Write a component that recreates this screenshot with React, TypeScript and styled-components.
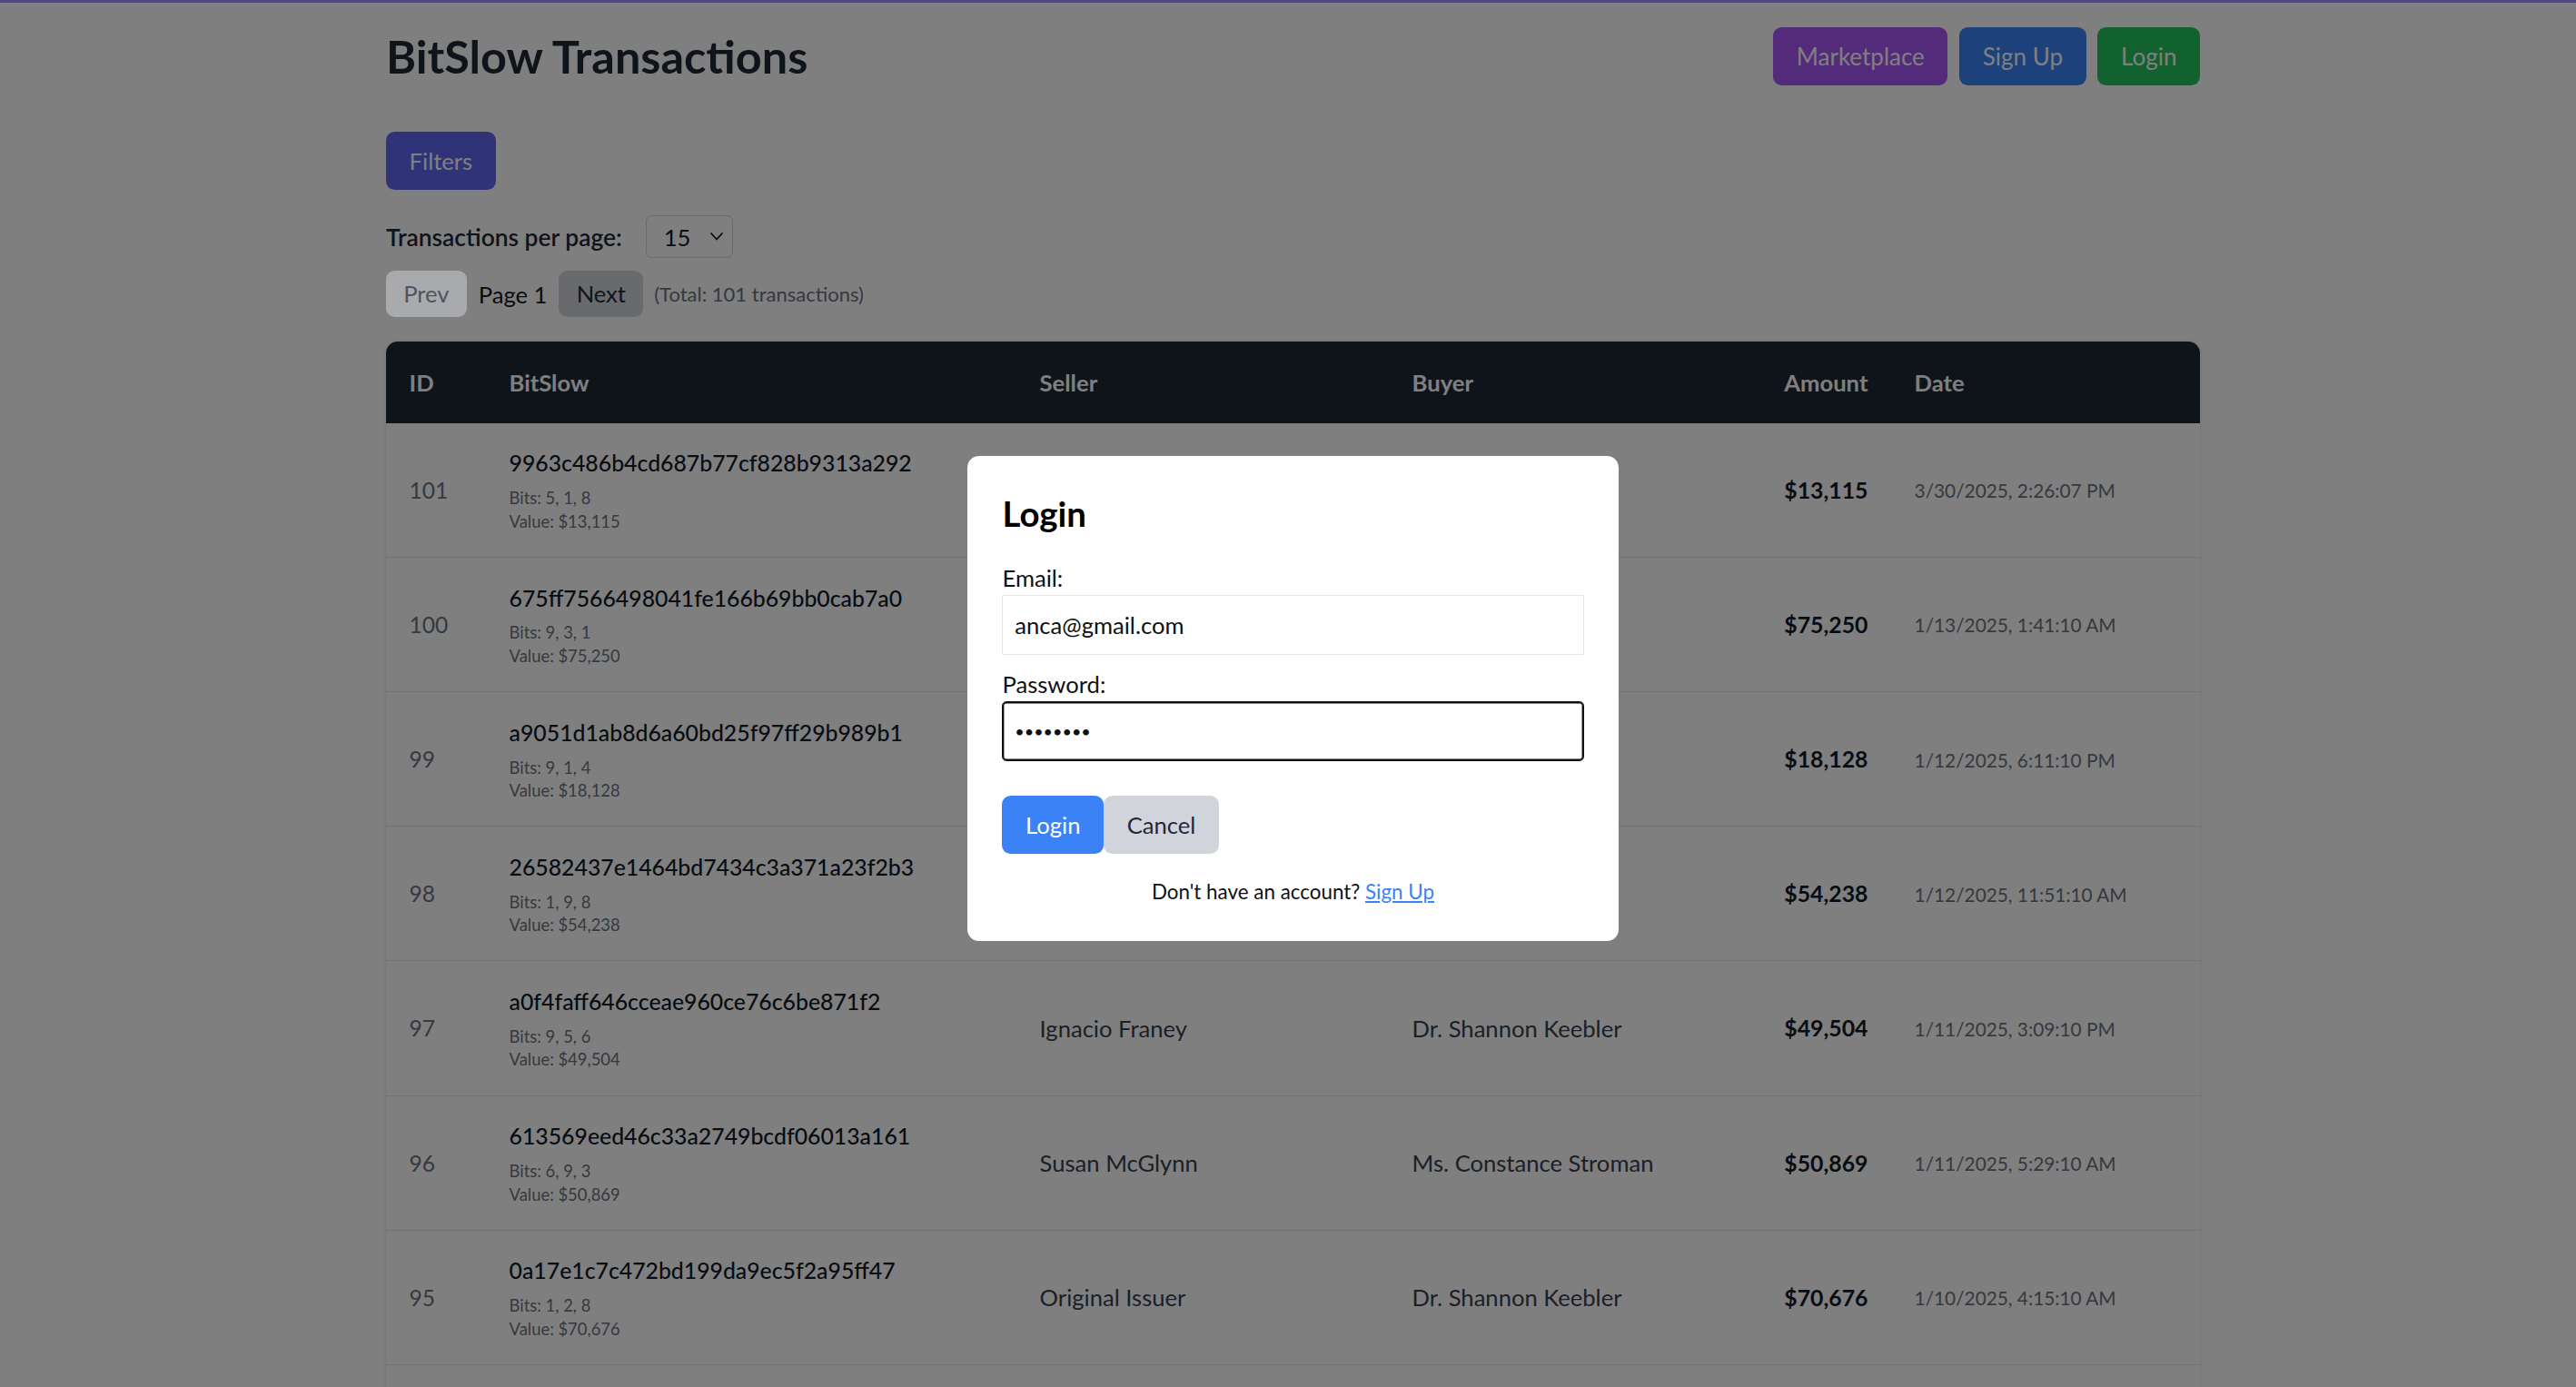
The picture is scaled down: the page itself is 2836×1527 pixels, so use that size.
import React from "react";
import styled, { createGlobalStyle } from "styled-components";

const FONT = `Lato, "Open Sans", "Noto Sans", sans-serif`;

const GlobalStyle = createGlobalStyle`
  * { box-sizing: border-box; }
  html, body { margin: 0; padding: 0; background: #ffffff; overflow: hidden; }
  body { font-family: ${FONT}; color: #1f2937; }
`;

const TopLine = styled.div`
  height: 3px;
  background: #a78bfa;
`;

const Container = styled.main`
  width: 2008px;
  margin: 0 auto;
  padding: 27px 0 0 11px;
`;

const Header = styled.header`
  display: flex;
  align-items: center;
  justify-content: space-between;
  margin-bottom: 51px;
`;

const Title = styled.h1`
  margin: 0;
  font-size: 50.4px;
  line-height: 57.6px;
  font-weight: 700;
  color: #1f2937;
`;

const Nav = styled.nav`
  display: flex;
  gap: 12.8px;
`;

const SolidButton = styled.button<{ $bg: string; $color?: string }>`
  border: none;
  margin: 0;
  font-family: ${FONT};
  font-size: 25.6px;
  line-height: 38.4px;
  padding: 12.8px 25.6px;
  border-radius: 9.6px;
  background: ${(p) => p.$bg};
  color: ${(p) => p.$color || "#ffffff"};
  cursor: pointer;
`;

const NavButton = styled(SolidButton)`
  font-size: 26px;
`;

const FiltersButton = styled(SolidButton)`
  display: block;
  margin-bottom: 28px;
`;

const PerPageRow = styled.div`
  display: flex;
  align-items: center;
  gap: 26px;
  margin-bottom: 14px;
`;

const PerPageLabel = styled.span`
  font-size: 26.4px;
  font-weight: 600;
  color: #1f2937;
`;

const SelectBox = styled.div`
  display: flex;
  align-items: center;
  justify-content: space-between;
  width: 96px;
  height: 47px;
  padding: 0 10px 0 19px;
  border: 1.6px solid #d1d5db;
  border-radius: 6.4px;
  font-size: 25.6px;
  color: #111827;
`;

const Pagination = styled.div`
  display: flex;
  align-items: center;
  margin-bottom: 27px;
`;

const PageButton = styled.button<{ $disabled?: boolean }>`
  border: none;
  margin: 0;
  font-family: ${FONT};
  font-size: 25.6px;
  line-height: 38.4px;
  padding: 6.4px 19.2px;
  border-radius: 9.6px;
  background: #d1d5db;
  color: #1f2937;
  ${(p) =>
    p.$disabled &&
    `
    opacity: 0.5;
    position: relative;
    z-index: 60;
  `}
`;

const PageLabel = styled.span`
  margin: 0 13px;
  font-size: 25.6px;
  color: #111827;
`;

const TotalText = styled.span`
  margin-left: 12px;
  font-size: 22px;
  color: #6b7280;
`;

const TableWrap = styled.div`
  border-radius: 12.8px;
  overflow: hidden;
  box-shadow: 0 1.6px 4.8px rgba(0, 0, 0, 0.12);
  background: #ffffff;
`;

const Table = styled.table`
  width: 100%;
  border-collapse: collapse;
  table-layout: fixed;
`;

const Th = styled.th<{ $right?: boolean }>`
  background: #1f2937;
  color: #ffffff;
  font-size: 25.6px;
  line-height: 38.4px;
  font-weight: 700;
  padding: 25.6px;
  text-align: ${(p) => (p.$right ? "right" : "left")};
`;

const Td = styled.td<{ $right?: boolean }>`
  padding: 25.6px;
  border-bottom: 1px solid #e5e7eb;
  vertical-align: middle;
  text-align: ${(p) => (p.$right ? "right" : "left")};
  font-size: 25.6px;
  line-height: 38.4px;
`;

const IdText = styled.span`
  font-size: 24.6px;
  color: #6b7280;
`;

const Hash = styled.div`
  font-size: 24.8px;
  font-weight: 500;
  color: #111827;
  white-space: nowrap;
`;

const Meta = styled.div`
  font-size: 18.4px;
  line-height: 25.6px;
  color: #6b7280;
`;

const MetaGroup = styled.div`
  margin-top: 6.4px;
`;

const Name = styled.span`
  color: #374151;
  white-space: nowrap;
`;

const Amount = styled.span`
  font-size: 24.8px;
  font-weight: 700;
  color: #111827;
`;

const DateText = styled.span`
  font-size: 20.8px;
  color: #6b7280;
  white-space: nowrap;
`;

const Overlay = styled.div`
  position: fixed;
  inset: 0;
  z-index: 50;
  background: rgba(0, 0, 0, 0.5);
  display: flex;
  align-items: center;
  justify-content: center;
  padding: 11px 0 0 11px;
`;

const Card = styled.div`
  width: 716.8px;
  background: #ffffff;
  border-radius: 12.8px;
  padding: 38.4px;
`;

const CardTitle = styled.h2`
  margin: 0 0 25.6px;
  font-size: 38.4px;
  line-height: 51.2px;
  font-weight: 700;
  color: #000000;
`;

const Field = styled.div`
  margin-bottom: 12.8px;
`;

const Label = styled.label`
  display: block;
  font-size: 25.6px;
  line-height: 38.4px;
  color: #111111;
`;

const Input = styled.input<{ $focused?: boolean }>`
  display: block;
  width: 100%;
  margin: 0;
  padding: 12.8px;
  border: 1.6px solid #e5e7eb;
  border-radius: 1px;
  font-family: ${FONT};
  font-size: 25.6px;
  line-height: 38.4px;
  height: 65.6px;
  color: #111111;
  background: #ffffff;
  outline: none;
  ${(p) =>
    p.$focused &&
    `
    font-size: 18px;
    border-color: #101010;
    border-radius: 4.8px;
    box-shadow: inset 0 0 0 1.4px #101010;
  `}
`;

const Actions = styled.div`
  display: flex;
  margin-top: 38.4px;
`;

const Footer = styled.p`
  margin: 25.6px 0 0;
  text-align: center;
  font-size: 22.4px;
  line-height: 32px;
  color: #111111;
`;

const FooterLink = styled.a`
  color: #3b82f6;
  text-decoration: underline;
`;

type Row = {
  id: number;
  hash: string;
  bits: string;
  value: string;
  seller: string;
  buyer: string;
  date: string;
};

const rows: Row[] = [
  { id: 101, hash: "9963c486b4cd687b77cf828b9313a292", bits: "5, 1, 8", value: "$13,115", seller: "Original Issuer", buyer: "Susan McGlynn", date: "3/30/2025, 2:26:07 PM" },
  { id: 100, hash: "675ff7566498041fe166b69bb0cab7a0", bits: "9, 3, 1", value: "$75,250", seller: "Ignacio Franey", buyer: "Susan McGlynn", date: "1/13/2025, 1:41:10 AM" },
  { id: 99, hash: "a9051d1ab8d6a60bd25f97ff29b989b1", bits: "9, 1, 4", value: "$18,128", seller: "Susan McGlynn", buyer: "Ignacio Franey", date: "1/12/2025, 6:11:10 PM" },
  { id: 98, hash: "26582437e1464bd7434c3a371a23f2b3", bits: "1, 9, 8", value: "$54,238", seller: "Original Issuer", buyer: "Ignacio Franey", date: "1/12/2025, 11:51:10 AM" },
  { id: 97, hash: "a0f4faff646cceae960ce76c6be871f2", bits: "9, 5, 6", value: "$49,504", seller: "Ignacio Franey", buyer: "Dr. Shannon Keebler", date: "1/11/2025, 3:09:10 PM" },
  { id: 96, hash: "613569eed46c33a2749bcdf06013a161", bits: "6, 9, 3", value: "$50,869", seller: "Susan McGlynn", buyer: "Ms. Constance Stroman", date: "1/11/2025, 5:29:10 AM" },
  { id: 95, hash: "0a17e1c7c472bd199da9ec5f2a95ff47", bits: "1, 2, 8", value: "$70,676", seller: "Original Issuer", buyer: "Dr. Shannon Keebler", date: "1/10/2025, 4:15:10 AM" },
  { id: 94, hash: "5b2e8d41f0c9a7736e1d4b08c2f5a914", bits: "3, 7, 2", value: "$31,402", seller: "Dr. Shannon Keebler", buyer: "Ignacio Franey", date: "1/10/2025, 2:01:10 AM" },
];

const colWidths = [110, 584, 410, 403, 150, 340];

const Chevron = () => (
  <svg width="14" height="9" viewBox="0 0 14 9" fill="none">
    <polyline points="1,1 7,7.5 13,1" stroke="#111827" strokeWidth="1.8" strokeLinecap="round" strokeLinejoin="round" />
  </svg>
);

export default function App() {
  return (
    <>
      <GlobalStyle />
      <TopLine />
      <Container>
        <Header>
          <Title>BitSlow Transactions</Title>
          <Nav>
            <NavButton $bg="#a855f7">Marketplace</NavButton>
            <NavButton $bg="#3b82f6">Sign Up</NavButton>
            <NavButton $bg="#22c55e">Login</NavButton>
          </Nav>
        </Header>

        <FiltersButton $bg="#6366f1">Filters</FiltersButton>

        <PerPageRow>
          <PerPageLabel>Transactions per page:</PerPageLabel>
          <SelectBox>
            <span>15</span>
            <Chevron />
          </SelectBox>
        </PerPageRow>

        <Pagination>
          <PageButton $disabled>Prev</PageButton>
          <PageLabel>Page 1</PageLabel>
          <PageButton>Next</PageButton>
          <TotalText>(Total: 101 transactions)</TotalText>
        </Pagination>

        <TableWrap>
          <Table>
            <colgroup>
              {colWidths.map((w, i) => (
                <col key={i} style={{ width: w }} />
              ))}
            </colgroup>
            <thead>
              <tr>
                <Th>ID</Th>
                <Th>BitSlow</Th>
                <Th>Seller</Th>
                <Th>Buyer</Th>
                <Th $right>Amount</Th>
                <Th>Date</Th>
              </tr>
            </thead>
            <tbody>
              {rows.map((r) => (
                <tr key={r.id}>
                  <Td>
                    <IdText>{r.id}</IdText>
                  </Td>
                  <Td>
                    <Hash>{r.hash}</Hash>
                    <MetaGroup>
                      <Meta>Bits: {r.bits}</Meta>
                      <Meta>Value: {r.value}</Meta>
                    </MetaGroup>
                  </Td>
                  <Td>
                    <Name>{r.seller}</Name>
                  </Td>
                  <Td>
                    <Name>{r.buyer}</Name>
                  </Td>
                  <Td $right>
                    <Amount>{r.value}</Amount>
                  </Td>
                  <Td>
                    <DateText>{r.date}</DateText>
                  </Td>
                </tr>
              ))}
            </tbody>
          </Table>
        </TableWrap>
      </Container>

      <Overlay>
        <Card>
          <CardTitle>Login</CardTitle>
          <Field>
            <Label>Email:</Label>
            <Input type="email" value="anca@gmail.com" readOnly />
          </Field>
          <Field>
            <Label>Password:</Label>
            <Input type="password" value="password" readOnly $focused />
          </Field>
          <Actions>
            <SolidButton $bg="#3b82f6">Login</SolidButton>
            <SolidButton $bg="#d1d5db" $color="#1f2937">Cancel</SolidButton>
          </Actions>
          <Footer>
            Don't have an account? <FooterLink href="#">Sign Up</FooterLink>
          </Footer>
        </Card>
      </Overlay>
    </>
  );
}
